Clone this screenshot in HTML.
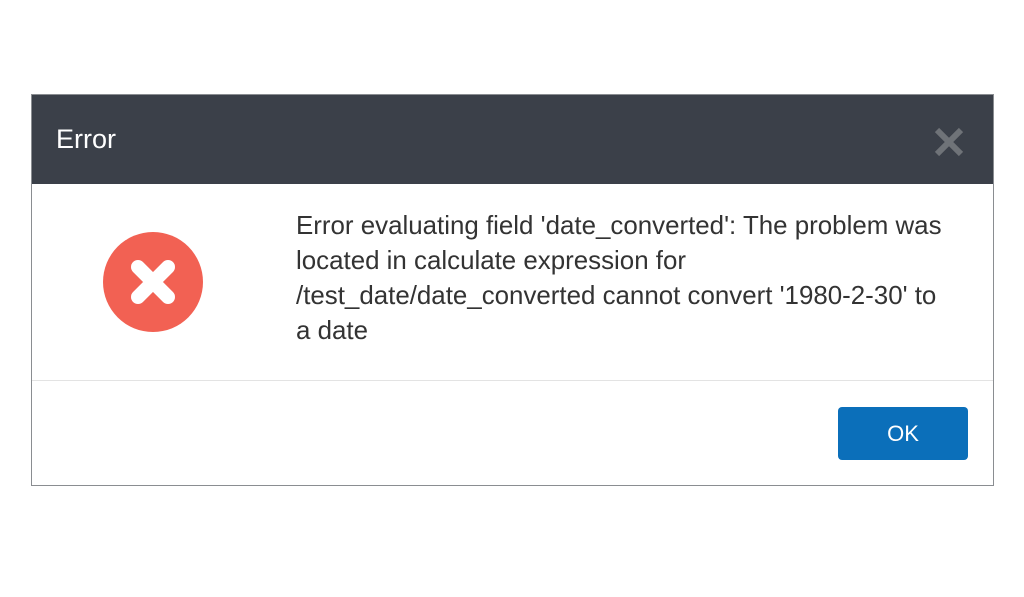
<!DOCTYPE html>
<html><head><style>
body{margin:0;width:1024px;height:597px;background:#fff;position:relative;overflow:hidden;font-family:"Liberation Sans",Arial,sans-serif}
.d{position:absolute;left:31px;top:94px;width:961px;height:390px;border:1px solid #8a8d91;background:#fff;box-sizing:content-box}
.h{position:absolute;left:0;top:0;width:961px;height:89px;background:#3b4049}
.t{position:absolute;left:24px;top:29px;color:#fff;font-size:27px}
.x{position:absolute;left:901px;top:31px}
.m{position:absolute;left:264px;top:114px;width:690px;color:#333;font-size:25.9px;line-height:35px;white-space:nowrap}
.f{position:absolute;left:0;top:285px;width:961px;height:1px;background:#e3e3e3}
.b{position:absolute;left:806px;top:312px;width:130px;height:53px;background:#0b6fba;border-radius:4px;color:#fff;font-size:22px;text-align:center;line-height:53px}
</style></head><body>
<div class="d">
<div class="h"><div class="t">Error</div>
<svg class="x" width="32" height="32" viewBox="0 0 32 32"><path d="M4 4L28 28M28 4L4 28" stroke="#6f7378" stroke-width="6"/></svg></div>
<svg style="position:absolute;left:70px;top:136px" width="102" height="102" viewBox="0 0 102 102"><circle cx="51" cy="51" r="50" fill="#f26153"/><path d="M36 36L66 66M66 36L36 66" stroke="#fff" stroke-width="14" stroke-linecap="round"/></svg>
<div class="m">Error evaluating field 'date_converted': The problem was<br>located in calculate expression for<br>/test_date/date_converted cannot convert '1980-2-30' to<br>a date</div>
<div class="f"></div>
<div class="b">OK</div>
</div>
</body></html>
